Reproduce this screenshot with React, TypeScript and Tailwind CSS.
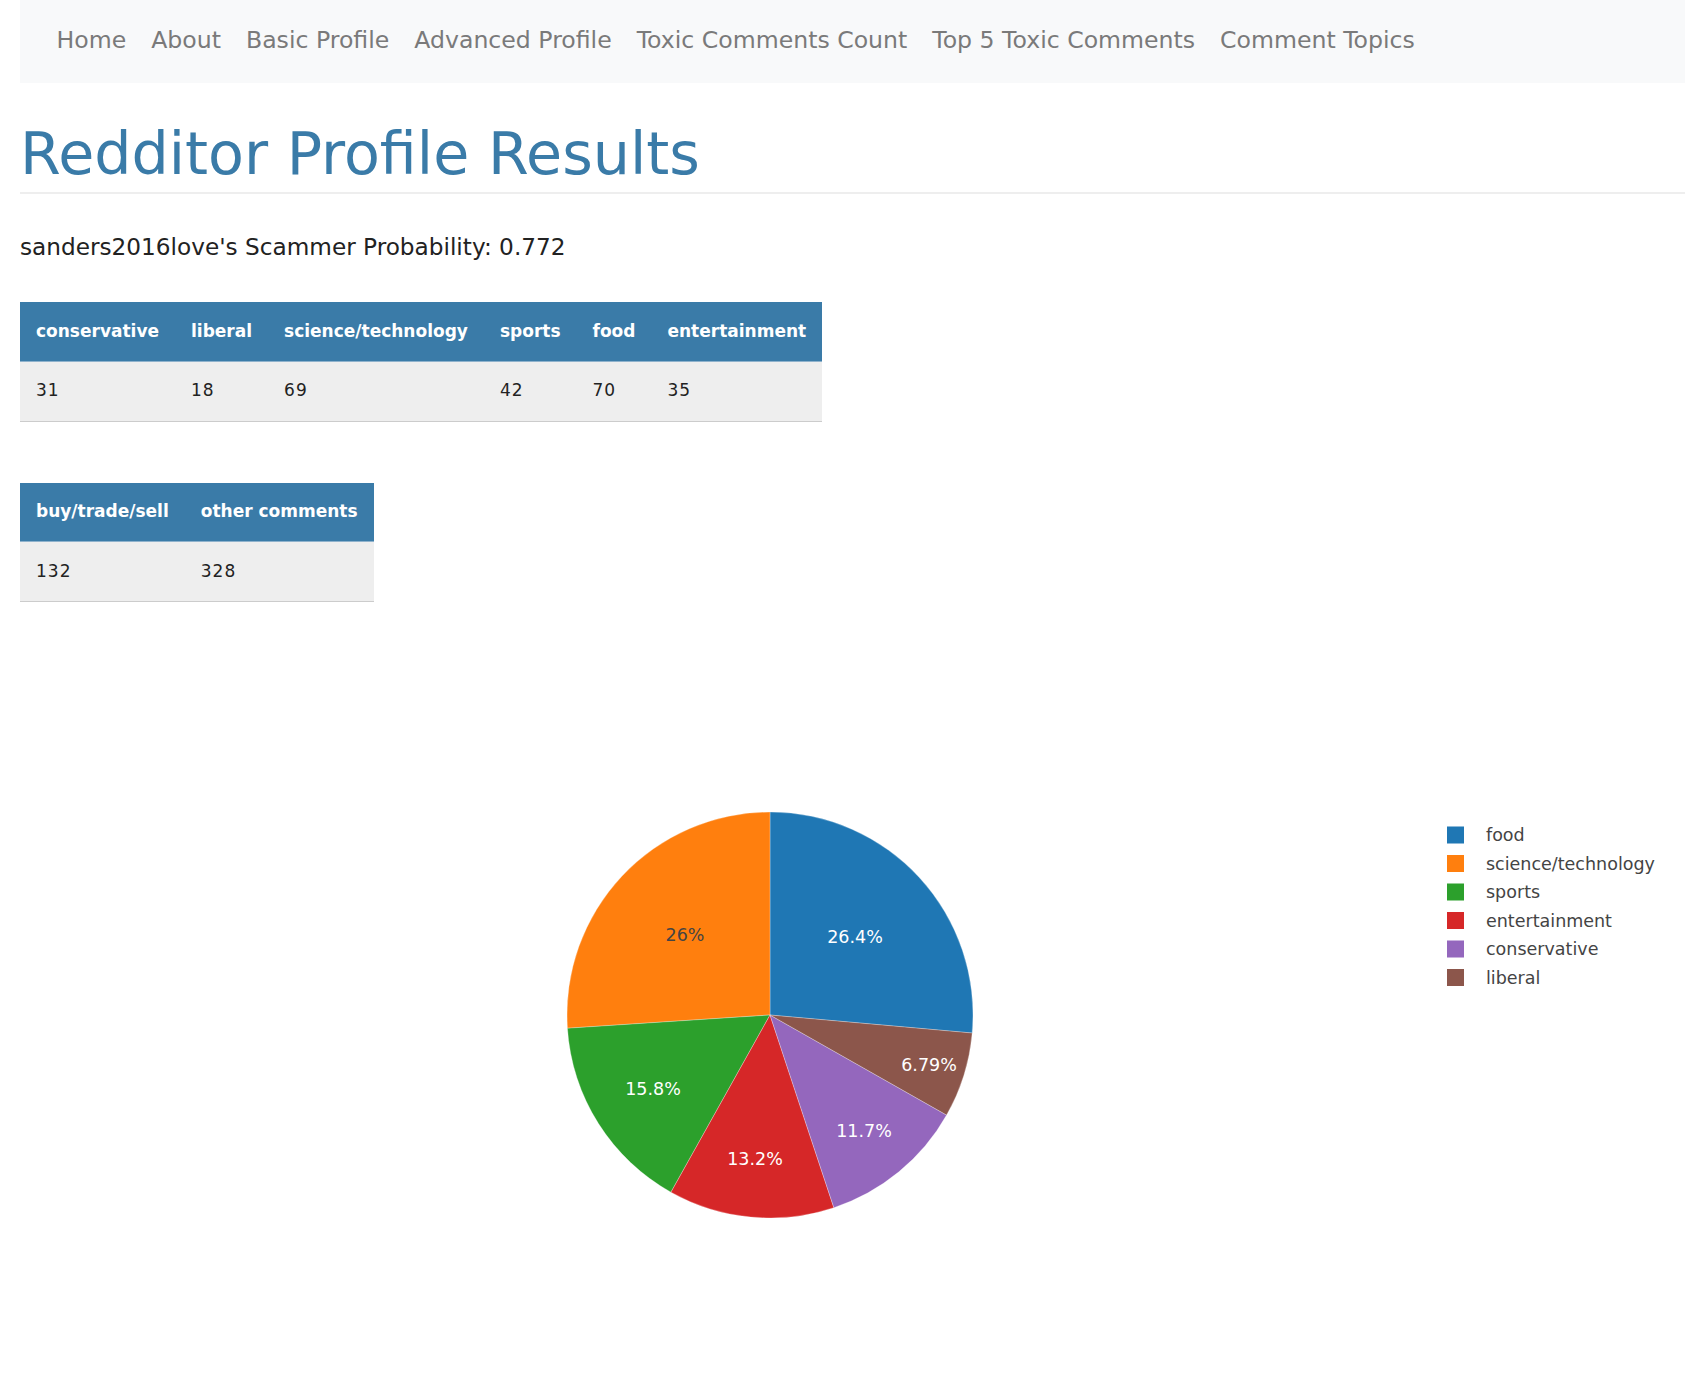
import React from "react";

const slices = [
  { name: "food", value: 70, color: "#1f77b4", label: "26.4%", lx: 835, ly: 296, dark: false },
  { name: "science/technology", value: 69, color: "#ff7f0e", label: "26%", lx: 665, ly: 294, dark: true },
  { name: "sports", value: 42, color: "#2ca02c", label: "15.8%", lx: 633, ly: 448, dark: false },
  { name: "entertainment", value: 35, color: "#d62728", label: "13.2%", lx: 735, ly: 518, dark: false },
  { name: "conservative", value: 31, color: "#9467bd", label: "11.7%", lx: 844, ly: 490, dark: false },
  { name: "liberal", value: 18, color: "#8c564b", label: "6.79%", lx: 909, ly: 424, dark: false },
];

function PieChart() {
  const cx = 750;
  const cy = 374;
  const r = 203;
  const total = slices.reduce((s, x) => s + x.value, 0);
  const foodAng = (slices[0].value / total) * 360;
  const pt = (deg: number) => {
    const a = (deg * Math.PI) / 180;
    return [cx + r * Math.sin(a), cy - r * Math.cos(a)];
  };
  const ranges: [number, number][] = [];
  ranges[0] = [0, foodAng];
  let cur = 360;
  for (let i = 1; i < slices.length; i++) {
    const sweep = (slices[i].value / total) * 360;
    ranges[i] = [cur - sweep, cur];
    cur -= sweep;
  }
  const paths = slices.map((s, i) => {
    const [a0, a1] = ranges[i];
    const [x0, y0] = pt(a0);
    const [x1, y1] = pt(a1);
    const large = a1 - a0 > 180 ? 1 : 0;
    return {
      d: `M ${cx} ${cy} L ${x0} ${y0} A ${r} ${r} 0 ${large} 1 ${x1} ${y1} Z`,
      color: s.color,
    };
  });
  return (
    <svg width="1665" height="738" className="block">
      {paths.map((p, i) => (
        <path key={i} d={p.d} fill={p.color} stroke="#ffffff" strokeOpacity="0.35" strokeWidth="0.8" />
      ))}
      {slices.map((s) => (
        <text
          key={s.name + "l"}
          x={s.lx}
          y={s.ly}
          textAnchor="middle"
          dominantBaseline="central"
          fontFamily="'DejaVu Sans', Verdana, sans-serif"
          fontSize="17.5"
          fill={s.dark ? "#444444" : "#ffffff"}
        >
          {s.label}
        </text>
      ))}
      {slices.map((s, i) => (
        <g key={s.name + "g"}>
          <rect x={1427} y={185.5 + i * 28.5} width={17} height={17} fill={s.color} />
          <text
            x={1466}
            y={194 + i * 28.5}
            dominantBaseline="central"
            fontFamily="'DejaVu Sans', Verdana, sans-serif"
            fontSize="17.5"
            fill="#444444"
          >
            {s.name}
          </text>
        </g>
      ))}
    </svg>
  );
}

function DataTable({ headers, values }: { headers: string[]; values: string[] }) {
  return (
    <table className="border-collapse">
      <thead>
        <tr className="bg-[#3a7ba8]">
          {headers.map((h) => (
            <th
              key={h}
              className="h-[59px] px-4 text-left text-[17px] font-bold text-white border-b border-[#8fb2cc] whitespace-nowrap"
            >
              {h}
            </th>
          ))}
        </tr>
      </thead>
      <tbody>
        <tr className="bg-[#eeeeee]">
          {values.map((v, i) => (
            <td
              key={i}
              className="h-[60px] px-4 text-left text-[17px] tracking-[1px] text-[#222222] border-b border-[#cccccc]"
            >
              {v}
            </td>
          ))}
        </tr>
      </tbody>
    </table>
  );
}

export default function App() {
  const nav = [
    "Home",
    "About",
    "Basic Profile",
    "Advanced Profile",
    "Toxic Comments Count",
    "Top 5 Toxic Comments",
    "Comment Topics",
  ];
  return (
    <div className="w-[1699px] min-h-[1378px] bg-white pl-[20px] pr-[14px] font-['DejaVu_Sans',Verdana,sans-serif]">
      <nav className="h-[83px] bg-[#f8f9fa] flex items-start pl-[24px] pt-[25px]">
        {nav.map((n) => (
          <a key={n} className="px-[12.5px] text-[23.6px] leading-[31px] text-[#7a7a7a] whitespace-nowrap">
            {n}
          </a>
        ))}
      </nav>
      <h1 className="mt-[39px] text-[58.7px] leading-[64px] text-[#3a7ba8] font-normal">
        Redditor Profile Results
      </h1>
      <div className="mt-[6px] h-[2px] bg-[#eeeeee]" />
      <p className="mt-[38px] text-[23.2px] leading-[30px] text-[#222222]">
        sanders2016love's Scammer Probability: 0.772
      </p>
      <div className="mt-[40px]">
        <DataTable
          headers={["conservative", "liberal", "science/technology", "sports", "food", "entertainment"]}
          values={["31", "18", "69", "42", "70", "35"]}
        />
      </div>
      <div className="mt-[61px]">
        <DataTable headers={["buy/trade/sell", "other comments"]} values={["132", "328"]} />
      </div>
      <div className="mt-[39px]">
        <PieChart />
      </div>
    </div>
  );
}
